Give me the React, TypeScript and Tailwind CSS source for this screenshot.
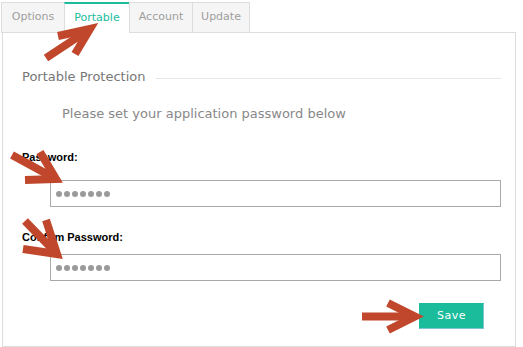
import React from 'react';

const ARROW = '#c1472c';

const Arrow: React.FC<{ tail: [number, number]; tip: [number, number]; w1: [number, number]; w2: [number, number] }> = ({ tail, tip, w1, w2 }) => (
  <g stroke={ARROW} strokeWidth={8} fill="none" strokeLinejoin="miter" strokeMiterlimit={10}>
    <line x1={tail[0]} y1={tail[1]} x2={tip[0]} y2={tip[1]} />
    <polyline points={`${w1[0]},${w1[1]} ${tip[0]},${tip[1]} ${w2[0]},${w2[1]}`} />
  </g>
);

const Dots: React.FC = () => (
  <div className="flex gap-[2px] pl-[5px] pt-[10px]">
    {[0, 1, 2, 3, 4, 5, 6].map((i) => (
      <span key={i} className="w-[6px] h-[6px] rounded-full bg-[#9a9a9a]"></span>
    ))}
  </div>
);

const App: React.FC = () => {
  const tabs = [
    { label: 'Options', w: 'w-[64px]' },
    { label: 'Portable', w: 'w-[66px]' },
    { label: 'Account', w: 'w-[64px]' },
    { label: 'Update', w: 'w-[58px]' },
  ];

  return (
    <div className="relative w-[523px] h-[347px] bg-white font-['DejaVu_Sans',sans-serif] overflow-hidden">
      {/* Tabs */}
      <div className="flex pt-[2px] pl-[1px] relative z-10 -mb-px">
        {tabs.map((t, i) =>
          t.label === 'Portable' ? (
            <div
              key={t.label}
              className={`${t.w} h-[31px] -ml-px bg-white border-x border-[#dddddd] border-t-2 border-t-[#1abc9c] border-b border-b-white flex items-center justify-center text-[11px] text-[#1abc9c]`}
            >
              {t.label}
            </div>
          ) : (
            <div
              key={t.label}
              className={`${t.w} h-[31px] ${i > 0 ? '-ml-px' : ''} bg-[#f5f5f5] border border-[#dddddd] flex items-center justify-center text-[11px] text-[#9e9e9e]`}
            >
              {t.label}
            </div>
          )
        )}
      </div>

      {/* Panel */}
      <div className="ml-[2px] w-[514px] h-[315px] border border-[#dddddd] pl-[19px] pr-[14px] pt-[36px]">
        <div className="flex items-center gap-[10px]">
          <span className="text-[13px] leading-[16px] text-[#777777]">Portable Protection</span>
          <div className="flex-1 h-px bg-[#e6e6e6] mt-[2px]"></div>
        </div>

        <p className="mt-[21px] ml-[40px] text-[13px] leading-[16px] text-[#888888]">
          Please set your application password below
        </p>

        <label className="block mt-[28px] font-['Liberation_Sans',Arial,sans-serif] font-bold text-[11px] leading-[14px] text-black">
          Password:
        </label>
        <div className="mt-[16px] ml-[28px] h-[27px] border border-[#aaaaaa] bg-white">
          <Dots />
        </div>

        <label className="block mt-[23px] font-['Liberation_Sans',Arial,sans-serif] font-bold text-[11px] leading-[14px] text-black">
          Confirm Password:
        </label>
        <div className="mt-[10px] ml-[28px] h-[27px] border border-[#aaaaaa] bg-white">
          <Dots />
        </div>

        <div className="flex justify-end mt-[22px] pr-[17px]">
          <button className="w-[65px] h-[26px] bg-[#1abc9c] border border-[#1abc9c] border-r-[#7cc3d6] border-b-[#7cc3d6] text-white text-[11px] tracking-[0.5px]">
            Save
          </button>
        </div>
      </div>

      {/* Annotation arrows */}
      <svg className="absolute inset-0 pointer-events-none z-20" width="523" height="347">
        <Arrow tail={[46, 58]} tip={[90, 29]} w1={[58, 36]} w2={[75, 54]} />
        <Arrow tail={[12, 155]} tip={[56, 179]} w1={[40, 152]} w2={[25, 180]} />
        <Arrow tail={[25, 221]} tip={[57, 254]} w1={[46, 220]} w2={[23, 249]} />
        <Arrow tail={[362, 316.5]} tip={[415, 316.5]} w1={[388, 303]} w2={[388, 330]} />
      </svg>
    </div>
  );
};

export default App;
